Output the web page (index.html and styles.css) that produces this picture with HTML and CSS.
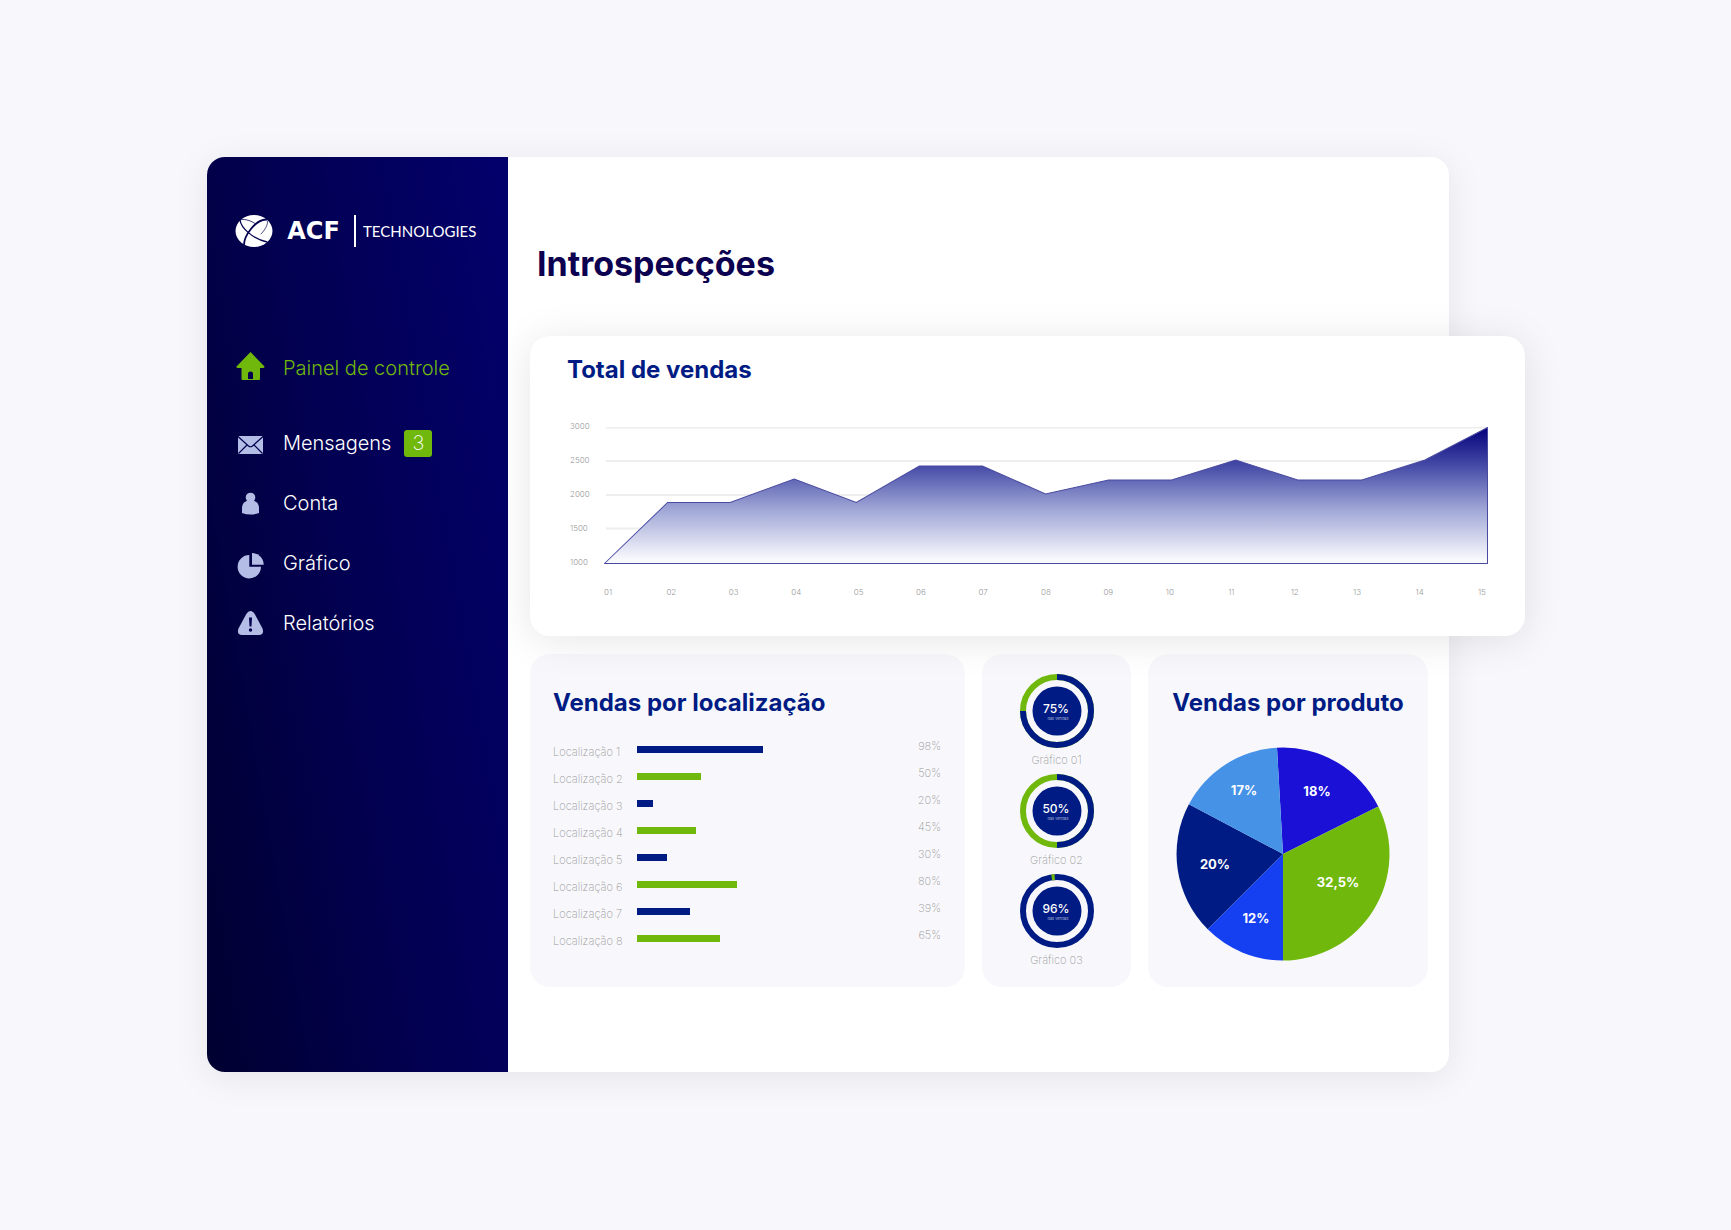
FILE: index.html
```html
<!DOCTYPE html>
<html lang="pt">

<head>
    <meta charset="UTF-8">
    <meta name="viewport" content="width=device-width, initial-scale=1.0">
    <title>ACF Technologies - Introspecções</title>
    <link rel="stylesheet" href="styles.css">
</head>

<body>
    <div class="app">
        <aside class="sidebar">
            <div class="logo">
                <svg class="logo-mark" viewBox="0 0 38 34" aria-hidden="true">
                    <ellipse cx="19" cy="17" rx="18.500" ry="16" fill="#fff" />
                    <g fill="none" stroke="#02004f" stroke-linecap="round">
                        <path d="M5 6C6 14 18 25 32 28" stroke-width="1.300" />
                        <path d="M5 6C8 4.500 15 6 20 9.500" stroke-width="0.800" />
                        <path d="M9 31C9 22 20 6 31 5.500" stroke-width="1.800" />
                        <path d="M31 5.500C35 7 31 15 26 20" stroke-width="0.700" />
                    </g>
                </svg>
                <span class="logo-name">ACF</span>
                <span class="logo-sub">TECHNOLOGIES</span>
            </div>

            <nav class="menu">
                <a href="#" class="menu-item active">
                    <svg class="menu-icon" viewBox="0 0 30 32" aria-hidden="true">
                        <path fill="currentColor" d="M15.500 0L29.500 14.500Q29.500 16 28 16H25V27Q25 28 24 28H7.500Q6.500 28 6.500 27V16H3Q1 16 1.500 14.500Z" />
                        <path fill="#02004f" d="M13 27V21.500Q13 19.500 15.500 19.500T18 21.500V27Z" />
                    </svg>
                    <span>Painel de controle</span>
                </a>
                <a href="#" class="menu-item">
                    <svg class="menu-icon" viewBox="0 0 30 32" aria-hidden="true">
                        <rect x="3" y="9" width="25" height="18" rx="1" fill="currentColor" />
                        <path d="M3 9.500L13.500 19Q15.500 20.500 17.500 19L28 9.500M3.500 26.500L12 18M27.500 26.500L19 18" fill="none" stroke="#02004f" stroke-width="1.200" />
                    </svg>
                    <span>Mensagens</span>
                    <span class="badge">3</span>
                </a>
                <a href="#" class="menu-item">
                    <svg class="menu-icon" viewBox="0 0 30 32" aria-hidden="true">
                        <circle cx="15.500" cy="10.500" r="4.800" fill="currentColor" />
                        <path fill="currentColor" d="M11.500 14H19.500Q24 16 24 21V26Q20 27.500 15.500 27.500T7 26V21Q7 16 11.500 14Z" />
                    </svg>
                    <span>Conta</span>
                </a>
                <a href="#" class="menu-item">
                    <svg class="menu-icon" viewBox="0 0 30 32" aria-hidden="true">
                        <path fill="currentColor" d="M14.300 8A11.700 11.700 0 1 0 26 19.700H14.300Z" />
                        <path fill="currentColor" d="M17 6A11.700 11.700 0 0 1 28.700 17.700H17Z" />
                    </svg>
                    <span>Gráfico</span>
                </a>
                <a href="#" class="menu-item">
                    <svg class="menu-icon" viewBox="0 0 30 32" aria-hidden="true">
                        <path fill="currentColor" d="M15.500 4Q18 4 20 7.500L27.500 21.500Q29.500 28 24 28H7Q1.500 28 3.500 21.500L11 7.500Q13 4 15.500 4Z" />
                        <path fill="#02004f" d="M14 10.500H17L16.500 19.500H14.500Z" />
                        <circle cx="15.500" cy="23" r="1.700" fill="#02004f" />
                    </svg>
                    <span>Relatórios</span>
                </a>
            </nav>
        </aside>

        <main class="content">
            <h1>Introspecções</h1>

            <section class="sales-card">
                <h2>Total de vendas</h2>
                <div class="chart">
                    <ul class="y-axis">
                        <li>3000</li>
                        <li>2500</li>
                        <li>2000</li>
                        <li>1500</li>
                        <li>1000</li>
                    </ul>
                    <svg class="plot" viewBox="0 0 883 137" preserveAspectRatio="none" role="img" aria-label="Total de vendas">
                        <defs>
                            <linearGradient id="area" x1="0" y1="0" x2="0" y2="1">
                                <stop offset="0" stop-color="#04007c" />
                                <stop offset="0.3" stop-color="#4a50a9" />
                                <stop offset="0.6" stop-color="#9fa6d6" />
                                <stop offset="0.97" stop-color="#f8f9fd" />
                            </linearGradient>
                        </defs>
                        <g stroke="#eeeeee" stroke-width="2">
                            <path d="M2 0.500H883M2 34H883M2 68H883M2 101.500H883" />
                        </g>
                        <path d="M0.500 136.500L63.500 75.500H126L190 52L252 75.500L315 39H378L441 67L504 53H567L631 33L693 53H757L820 33L882.500 0.500V136.500Z" fill="url(#area)" stroke="#4a4aa0" stroke-width="1" />
                    </svg>
                    <ul class="x-axis">
                        <li>01</li>
                        <li>02</li>
                        <li>03</li>
                        <li>04</li>
                        <li>05</li>
                        <li>06</li>
                        <li>07</li>
                        <li>08</li>
                        <li>09</li>
                        <li>10</li>
                        <li>11</li>
                        <li>12</li>
                        <li>13</li>
                        <li>14</li>
                        <li>15</li>
                    </ul>
                </div>
            </section>

            <div class="cards">
                <section class="card">
                    <h2>Vendas por localização</h2>
                    <ul class="locations">
                        <li><span class="name">Localização 1</span><span class="track"><span class="bar" style="width: 97%"></span></span><span class="pct">98%</span></li>
                        <li><span class="name">Localização 2</span><span class="track"><span class="bar" style="width: 49%"></span></span><span class="pct">50%</span></li>
                        <li><span class="name">Localização 3</span><span class="track"><span class="bar" style="width: 12%"></span></span><span class="pct">20%</span></li>
                        <li><span class="name">Localização 4</span><span class="track"><span class="bar" style="width: 45%"></span></span><span class="pct">45%</span></li>
                        <li><span class="name">Localização 5</span><span class="track"><span class="bar" style="width: 23%"></span></span><span class="pct">30%</span></li>
                        <li><span class="name">Localização 6</span><span class="track"><span class="bar" style="width: 77%"></span></span><span class="pct">80%</span></li>
                        <li><span class="name">Localização 7</span><span class="track"><span class="bar" style="width: 41%"></span></span><span class="pct">39%</span></li>
                        <li><span class="name">Localização 8</span><span class="track"><span class="bar" style="width: 64%"></span></span><span class="pct">65%</span></li>
                    </ul>
                </section>

                <section class="card rings">
                    <figure>
                        <svg class="ring" viewBox="0 0 74 74">
                            <circle class="ring-rest" cx="37" cy="37" r="34" />
                            <circle class="ring-value" cx="37" cy="37" r="34" pathLength="100" stroke-dasharray="75 100" />
                            <circle class="ring-core" cx="37" cy="37" r="24.500" />
                            <text class="ring-number" x="36" y="39">75%</text>
                            <text class="ring-note" x="38" y="46">das vendas</text>
                        </svg>
                        <figcaption>Gráfico 01</figcaption>
                    </figure>
                    <figure>
                        <svg class="ring" viewBox="0 0 74 74">
                            <circle class="ring-rest" cx="37" cy="37" r="34" />
                            <circle class="ring-value" cx="37" cy="37" r="34" pathLength="100" stroke-dasharray="50 100" />
                            <circle class="ring-core" cx="37" cy="37" r="24.500" />
                            <text class="ring-number" x="36" y="39">50%</text>
                            <text class="ring-note" x="38" y="46">das vendas</text>
                        </svg>
                        <figcaption>Gráfico 02</figcaption>
                    </figure>
                    <figure>
                        <svg class="ring" viewBox="0 0 74 74">
                            <circle class="ring-value" cx="37" cy="37" r="34" />
                            <circle class="ring-rest" cx="37" cy="37" r="34" pathLength="100" stroke-dasharray="1.400 98.600" stroke-dashoffset="-97.500" />
                            <circle class="ring-core" cx="37" cy="37" r="24.500" />
                            <text class="ring-number" x="36" y="39">96%</text>
                            <text class="ring-note" x="38" y="46">das vendas</text>
                        </svg>
                        <figcaption>Gráfico 03</figcaption>
                    </figure>
                </section>

                <section class="card products">
                    <h2>Vendas por produto</h2>
                    <svg class="pie" viewBox="0 0 214 214" role="img" aria-label="Vendas por produto">
                        <path fill="#1a10d6" d="M107 107L101 0.700A106.500 106.500 0 0 1 202.300 59.500Z" />
                        <path fill="#70b80c" d="M107 107L202.300 59.500A106.500 106.500 0 0 1 107 213.500Z" />
                        <path fill="#1540f2" d="M107 107V213.500A106.500 106.500 0 0 1 31.700 182.300Z" />
                        <path fill="#001c84" d="M107 107L31.700 182.300A106.500 106.500 0 0 1 12.900 57.200Z" />
                        <path fill="#4592e7" d="M107 107L12.900 57.200A106.500 106.500 0 0 1 101 0.700Z" />
                        <text x="68" y="48">17%</text>
                        <text x="141" y="49">18%</text>
                        <text x="162" y="140">32,5%</text>
                        <text x="39" y="122">20%</text>
                        <text x="80" y="176">12%</text>
                    </svg>
                </section>
            </div>
        </main>
    </div>
</body>

</html>
```
FILE: styles.css
```css
* {
    margin: 0;
    padding: 0;
    box-sizing: border-box;
}

body {
    padding: 157px 282px 158px 207px;
    background-color: #f8f8fc;
    font-family: Inter, "Open Sans", sans-serif;
}

ul {
    list-style: none;
}

.app {
    display: flex;
    border-radius: 18px;
    background-color: #fff;
    box-shadow: 0 6px 36px rgba(0, 0, 0, 0.08);
}

/* sidebar */
.sidebar {
    flex: 0 0 301px;
    padding: 57px 28px;
    border-radius: 18px 0 0 18px;
    background: linear-gradient(80deg, #000030, #02004f 45%, #03006c);
    color: #fff;
}

.logo {
    display: flex;
    align-items: center;
    height: 34px;
}

.logo-mark {
    width: 38px;
    height: 34px;
}

.logo-name {
    flex: 0 0 81px;
    font-family: "DejaVu Sans", sans-serif;
    font-size: 24px;
    font-weight: bold;
    line-height: 34px;
    text-align: center;
}

.logo-sub {
    padding-left: 7px;
    border-left: 2px solid #fff;
    font-family: Lato, sans-serif;
    font-size: 15px;
    line-height: 32px;
}

.menu {
    margin-top: 100px;
}

.menu-item {
    display: flex;
    align-items: center;
    gap: 18px;
    height: 60px;
    color: #fff;
    font-size: 20px;
    font-weight: 300;
    text-decoration: none;
}

.menu-item.active {
    height: 40px;
    margin-bottom: 25px;
    color: #70b80c;
}

.menu-icon {
    width: 30px;
    height: 32px;
    color: #b3bde5;
}

.active .menu-icon {
    color: #70b80c;
}

.badge {
    width: 28px;
    margin-left: -5px;
    border-radius: 3px;
    background-color: #70b80c;
    font-weight: 200;
    line-height: 27px;
    text-align: center;
}

/* content */
.content {
    flex: 1;
    min-width: 0;
    padding: 87px 21px 85px 22px;
}

h1 {
    margin: 0 7px 52px;
    color: #0c0150;
    font-size: 34px;
    line-height: 40px;
}

h2 {
    color: #001c84;
    font-size: 24px;
    line-height: 32px;
    white-space: nowrap;
}

.sales-card {
    position: relative;
    z-index: 1;
    margin-right: -97px;
    padding: 18px 37px 38px;
    border-radius: 20px;
    background-color: #fff;
    box-shadow: 0 4px 40px rgba(0, 0, 0, 0.1);
}

.chart {
    display: grid;
    grid-template-columns: 37px 1fr;
    margin-top: 41px;
    color: #999;
    font-size: 8px;
    font-weight: 300;
    line-height: 12px;
}

.y-axis {
    display: flex;
    flex-direction: column;
    justify-content: space-between;
    margin: -7px 0 -4px;
    padding-left: 3px;
}

.plot {
    width: 100%;
    height: 137px;
}

.x-axis {
    grid-column: 2;
    display: flex;
    justify-content: space-between;
    margin-top: 22px;
}

.x-axis li {
    flex: 0 0 10px;
}

.cards {
    display: grid;
    grid-template-columns: 435fr 149fr 280fr;
    gap: 17px;
    margin-top: 18px;
}

.card {
    min-width: 0;
    padding: 33px 24px 33px 23px;
    border-radius: 20px;
    background-color: #f8f8fc;
}

/* sales by location */
.locations {
    display: grid;
    gap: 9px;
    margin-top: 21px;
}

.locations li {
    display: flex;
    height: 18px;
    color: #999;
    font-size: 11px;
    font-weight: 200;
    line-height: 12px;
}

.name {
    flex: 0 0 84px;
    align-self: flex-end;
}

.track {
    flex: 0 1 130px;
    align-self: center;
}

.bar {
    display: block;
    height: 7px;
    background-color: #001c84;
}

.locations li:nth-child(even) .bar {
    background-color: #70b80c;
}

.pct {
    margin-left: auto;
}

/* rings */
.rings {
    display: grid;
    gap: 7px;
    align-content: start;
    justify-items: center;
    padding: 20px 0;
}

.ring {
    display: block;
    width: 74px;
    height: 74px;
}

.ring-rest,
.ring-value {
    fill: none;
    stroke: #70b80c;
    stroke-width: 6;
    transform: rotate(-90deg);
    transform-origin: center;
}

.ring-value {
    stroke: #001c84;
}

.ring-core {
    fill: #001c84;
}

.ring text {
    fill: #fff;
    text-anchor: middle;
}

.ring-number {
    font-size: 12px;
    font-weight: 500;
}

.ring-note {
    font-size: 4px;
    font-weight: 200;
}

figcaption {
    margin-top: 5px;
    color: #999;
    font-size: 11px;
    font-weight: 200;
    line-height: 14px;
    text-align: center;
}

/* sales by product */
.products {
    display: flex;
    flex-direction: column;
    align-items: center;
    padding: 33px 20px 26px;
}

.pie {
    width: 214px;
    height: 214px;
    margin: 28px 10px 0 0;
}

.pie text {
    fill: #fff;
    font-size: 13px;
    font-weight: 700;
    text-anchor: middle;
}
```
